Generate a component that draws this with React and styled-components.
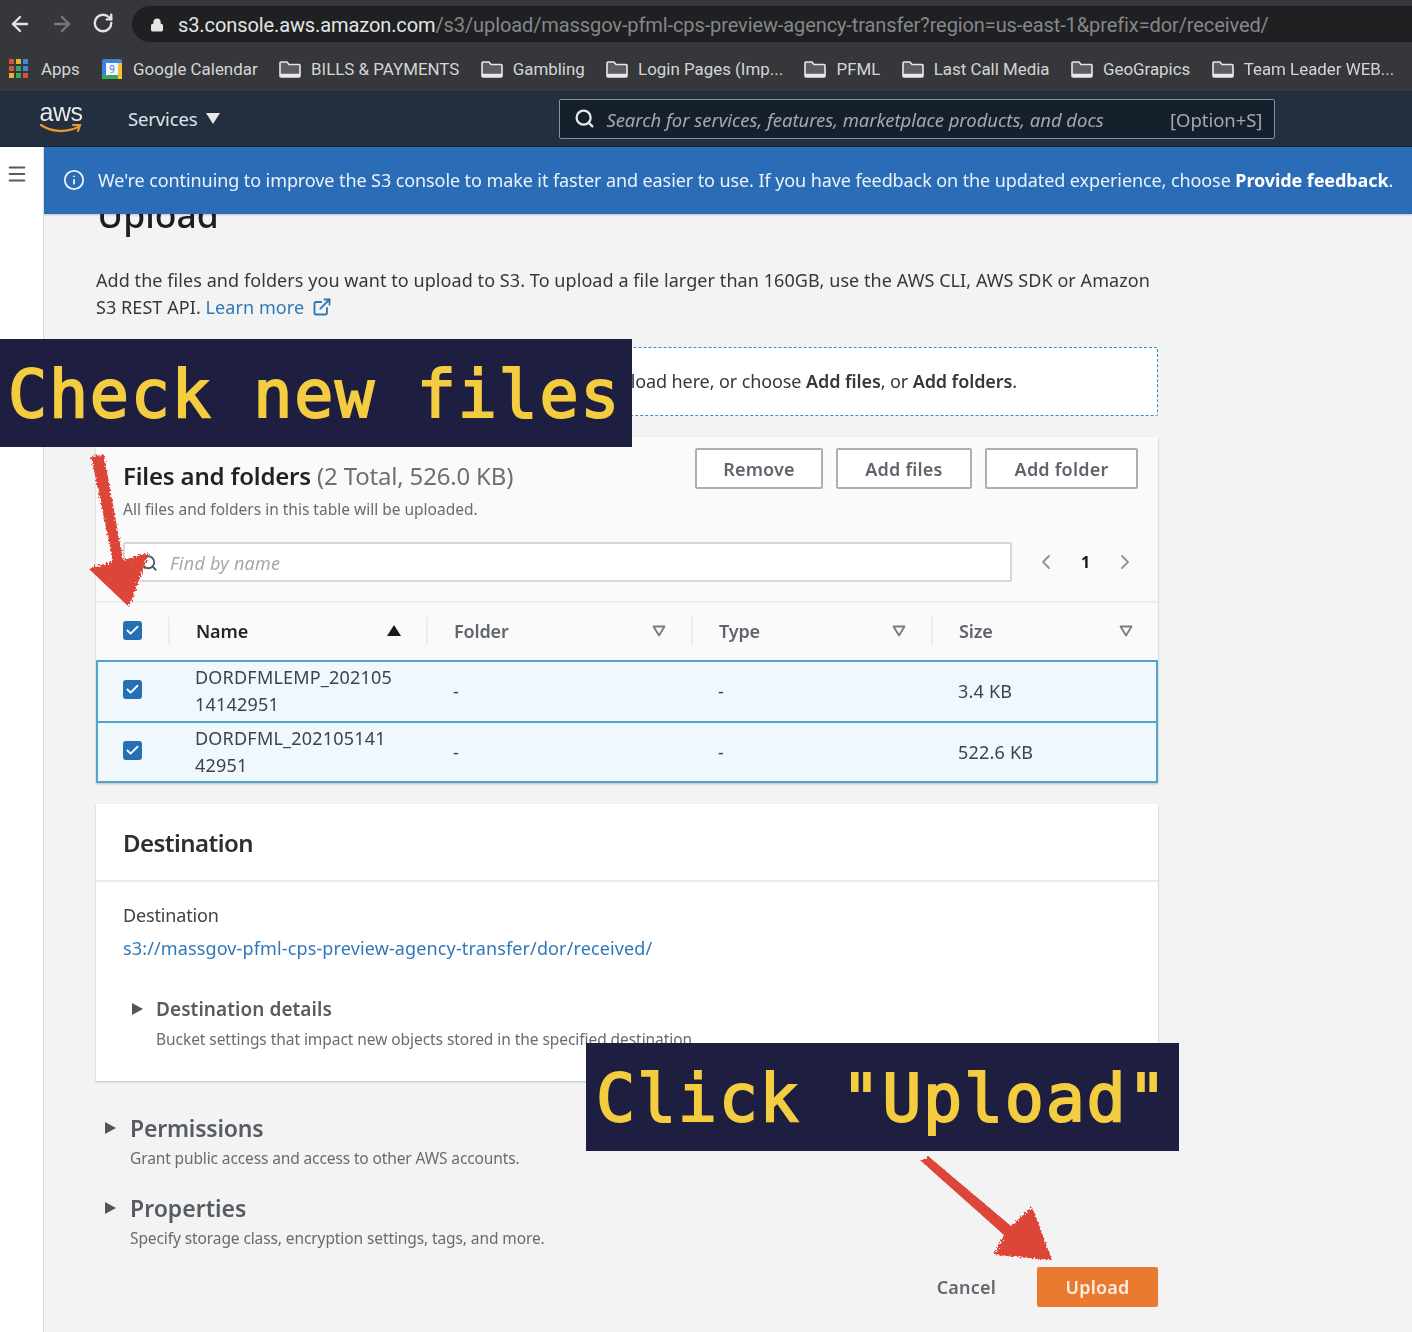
import React from "react";
import styled, { createGlobalStyle } from "styled-components";
import { ArrowLeft, ArrowRight, RotateCw, Lock, Search, Info, Menu, ChevronLeft, ChevronRight, Check, ExternalLink } from "lucide-react";

const GlobalStyle = createGlobalStyle`
	html, body { margin: 0; padding: 0; background: #f3f3f3; }
	* { box-sizing: border-box; }
`;

const Page = styled.div`
	position: relative;
	width: 1412px;
	height: 1332px;
	overflow: hidden;
	font-family: "Noto Sans", "Liberation Sans", sans-serif;
	color: #2b2f33;
`;

const Soft = styled.div`
	filter: blur(0.5px);
`;

const BrowserBar = styled.div`
	height: 46px;
	background: #36373a;
	display: flex;
	align-items: center;
	padding: 4px 0 0 8px;
	color: #d6d7d9;
`;

const NavButton = styled.span`
	width: 24px;
	height: 24px;
	margin-right: 18px;
	margin-top: -3px;
	display: flex;
	color: ${(p) => (p.$off ? "#77787b" : "#e2e3e5")};
`;

const UrlBar = styled.div`
	margin: -3px 0 0 -2px;
	flex: 1;
	height: 36px;
	border-radius: 18px 0 0 18px;
	background: #1f2022;
	display: flex;
	align-items: center;
	padding: 2px 0 0 18px;
	font-family: Roboto, sans-serif;
	font-size: 20px;
	letter-spacing: -0.1px;
	color: #85878a;
	white-space: nowrap;
	svg { margin-right: 14px; flex: none; }
	b { font-weight: 400; color: #e4e5e6; }
`;

const Bookmarks = styled.div`
	height: 45px;
	background: #36373a;
	display: flex;
	align-items: center;
	padding-left: 9px;
	gap: 21.4px;
	font-family: Roboto, sans-serif;
	font-size: 16.9px;
	color: #d4d5d7;
	white-space: nowrap;
`;

const Bookmark = styled.span`
	display: flex;
	align-items: center;
	gap: 10px;
`;

const AppsBookmark = styled(Bookmark)`
	gap: 13px;
`;

const AppsGrid = styled.span`
	display: grid;
	grid-template-columns: repeat(3, 5px);
	grid-auto-rows: 5px;
	gap: 2px;
`;

const AppsDot = styled.i`
	background: ${(p) => p.$c};
`;

const AwsBar = styled.div`
	height: 56px;
	background: #232f3e;
	display: flex;
	align-items: center;
	padding-left: 38px;
	border-bottom: 1px solid #1a2430;
`;

const AwsLogo = styled.div`
	position: relative;
	width: 46px;
	height: 40px;
	font-family: "Liberation Sans", sans-serif;
	font-size: 25px;
	line-height: 26px;
	color: #e6e8ea;
	letter-spacing: -0.5px;
	text-align: center;
	svg { display: block; margin-top: -2px; }
`;

const Services = styled.div`
	margin-left: 44px;
	font-family: "Noto Sans", sans-serif;
	font-size: 18.5px;
	color: #dfe2e5;
	display: flex;
	align-items: center;
	gap: 9px;
	letter-spacing: -0.15px;
	&::after {
		content: "";
		border-left: 7px solid transparent;
		border-right: 7px solid transparent;
		border-top: 11px solid #e6e8ea;
	}
`;

const GlobalSearch = styled.div`
	margin-left: 339px;
	width: 716px;
	height: 40px;
	background: #16202c;
	border: 1px solid #8a9199;
	border-radius: 2px;
	display: flex;
	align-items: center;
	padding: 2px 12px 0 14px;
	color: #e6e8ea;
	font-size: 18.5px;
	letter-spacing: -0.05px;
	svg { margin-right: 11px; flex: none; margin-top: -2px; }
	em { color: #a4a9af; flex: 1; white-space: nowrap; }
	span { color: #a4a9af; }
`;

const Body = styled.div`
	display: flex;
	height: 1185px;
`;

const Rail = styled.div`
	width: 44px;
	flex: none;
	background: #fff;
	border-right: 1px solid #d5dbdb;
	padding: 16px 0 0 6px;
	color: #555b61;
	svg { display: block; }
`;

const Main = styled.div`
	flex: 1;
	min-width: 0;
	overflow: hidden;
`;

const Banner = styled.div`
	position: relative;
	z-index: 1;
	height: 67px;
	background: #2a6cb6;
	display: flex;
	align-items: center;
	padding-left: 19px;
	padding-bottom: 1px;
	gap: 13px;
	color: #eaf3fb;
	font-size: 18px;
	letter-spacing: -0.09px;
	white-space: nowrap;
	box-shadow: 0 1px 2px rgba(0, 0, 0, 0.2);
	b { font-weight: 700; color: #fff; }
`;

const Content = styled.div`
	width: 1114px;
	padding-left: 52px;
`;

const PageTitle = styled.h1`
	margin: -21px 0 0 1px;
	font-size: 35.5px;
	line-height: 42px;
	font-weight: 500;
	color: #1b1f23;
`;

const Intro = styled.p`
	margin: 32px 0 0;
	font-size: 18px;
	line-height: 27px;
	letter-spacing: 0.07px;
	color: #33383d;
	a { color: #2f78b8; }
	svg { vertical-align: -3px; margin-left: 8px; color: #2f78b8; }
`;

const DropZone = styled.div`
	margin-top: 26px;
	height: 69px;
	border: 1px dashed #2f8fd0;
	border-radius: 2px;
	background: #fff;
	display: flex;
	align-items: center;
	justify-content: flex-end;
	padding: 0 140px 2px 0;
	font-size: 18px;
	letter-spacing: -0.1px;
	color: #33383d;
	white-space: pre;
	b { font-weight: 600; }
`;

const Panel = styled.section`
	margin-top: ${(p) => p.$top}px;
	background: #fff;
	box-shadow: 0 1px 2px rgba(0, 28, 36, 0.25);
`;

const FilesPanel = styled(Panel)`
	background: #fafafa;
`;

const PanelHead = styled.div`
	display: flex;
	justify-content: space-between;
	padding: 11px 20px 0 27px;
	height: 86px;
`;

const PanelTitle = styled.h2`
	margin: 12px 0 0;
	font-size: 24px;
	line-height: 32px;
	font-weight: 600;
	letter-spacing: -0.18px;
	color: #1f2327;
	span { font-weight: 400; color: #6b7177; }
`;

const PanelNote = styled.p`
	margin: 7px 0 0;
	font-size: 15.5px;
	color: #666c72;
	line-height: 20px;
`;

const Buttons = styled.div`
	display: flex;
	gap: 13px;
`;

const OutlineButton = styled.button`
	height: 41px;
	width: ${(p) => p.$w}px;
	background: #fff;
	border: 2px solid #aab0b5;
	border-radius: 2px;
	font: 600 18px "Noto Sans", sans-serif;
	letter-spacing: 0.2px;
	color: #5f656b;
`;

const FilterRow = styled.div`
	display: flex;
	align-items: center;
	height: 80px;
	padding: 0 21px 0 27px;
	border-bottom: 2px solid #eaeded;
`;

const FilterInput = styled.div`
	width: 889px;
	height: 40px;
	background: #fff;
	border: 2px solid #d5d8da;
	border-radius: 2px;
	display: flex;
	align-items: center;
	padding: 1px 0 0 15px;
	gap: 12px;
	font-size: 18px;
	font-style: italic;
	letter-spacing: 0.25px;
	color: #a4a9ae;
	svg { color: #555b61; }
`;

const Pager = styled.div`
	flex: 1;
	display: flex;
	justify-content: space-between;
	align-items: center;
	padding-left: 22px;
	color: #8e9399;
	b { color: #16191f; font-size: 16px; }
`;

const HeadRow = styled.div`
	display: grid;
	grid-template-columns: 72px 258px 265px 240px 1fr;
	height: 55px;
	align-items: center;
	font-size: 18px;
	font-weight: 600;
	letter-spacing: -0.15px;
	color: #5f656b;
`;

const HeadCell = styled.div`
	height: 28px;
	display: flex;
	align-items: center;
	justify-content: space-between;
	padding: 0 25px 0 26px;
	border-left: 2px solid #eceeee;
	color: ${(p) => (p.$dark ? "#24282c" : "#5f656b")};
`;

const CheckCell = styled.div`
	padding-left: 27px;
`;

const CheckBox = styled.span`
	width: 19px;
	height: 19px;
	display: flex;
	align-items: center;
	justify-content: center;
	border-radius: 3px;
	background: #2470b3;
	color: #fff;
`;

const SortUp = styled.i`
	border-left: 7px solid transparent;
	border-right: 7px solid transparent;
	border-bottom: 11px solid #16191f;
`;

const FilterDown = styled.svg`
	width: 14px;
	height: 12px;
	color: #757b81;
`;

const Rows = styled.div`
	margin-top: 2px;
	border: 2px solid #53a4c9;
	border-radius: 1px;
`;

const Row = styled.div`
	display: grid;
	grid-template-columns: 70px 259px 265px 240px 1fr;
	height: 59px;
	align-items: center;
	background: #f1f8fd;
	font-size: 18px;
	letter-spacing: 0.2px;
	line-height: 27px;
	color: #3e4348;
	& + & { border-top: 2px solid #53a4c9; height: 60px; }
`;

const RowCheck = styled(CheckCell)`
	padding-left: 25px;
	margin-bottom: 4px;
`;

const NameCell = styled.div`
	padding-left: 27px;
	margin-top: -1px;
`;

const ValueCell = styled.div`
	padding-left: 26px;
`;

const SectionHead = styled.div`
	height: 78px;
	padding: 0 27px;
	display: flex;
	align-items: center;
	border-bottom: 2px solid #eaeded;
	font-size: 24px;
	font-weight: 600;
	letter-spacing: -0.55px;
	color: #2b2f33;
`;

const SectionBody = styled.div`
	height: 199px;
	padding: 20px 27px 0;
`;

const FieldLabel = styled.div`
	font-size: 18px;
	line-height: 26px;
	letter-spacing: -0.15px;
	color: #3e4348;
`;

const FieldLink = styled.a`
	display: block;
	margin-top: 7px;
	font-size: 18px;
	line-height: 26px;
	letter-spacing: 0.13px;
	color: #2f78b8;
`;

const Expand = styled.div`
	position: relative;
	padding-left: ${(p) => p.$indent}px;
	margin-top: ${(p) => p.$top}px;
`;

const Caret = styled.i`
	position: absolute;
	left: ${(p) => p.$left}px;
	top: ${(p) => p.$y}px;
	border-top: 6px solid transparent;
	border-bottom: 6px solid transparent;
	border-left: 11px solid #50565c;
`;

const ExpandTitle = styled.div`
	font-size: ${(p) => p.$size}px;
	line-height: 30px;
	font-weight: 600;
	letter-spacing: ${(p) => p.$track}px;
	color: #565c62;
`;

const ExpandNote = styled.div`
	font-size: 15.5px;
	line-height: 20px;
	letter-spacing: ${(p) => p.$track}px;
	margin-top: 5px;
	color: #666c72;
	white-space: nowrap;
`;

const Actions = styled.div`
	display: flex;
	justify-content: flex-end;
	align-items: center;
	gap: 41px;
	margin-top: 19px;
`;

const CancelLink = styled.span`
	font-size: 18px;
	font-weight: 600;
	letter-spacing: 0.2px;
	color: #62686e;
`;

const PrimaryButton = styled.button`
	width: 121px;
	height: 40px;
	background: #ea7a30;
	border: 0;
	border-radius: 2px;
	font: 600 18px "Noto Sans", sans-serif;
	letter-spacing: 0.2px;
	color: #fbeee3;
`;

const Callout = styled.div`
	position: absolute;
	left: ${(p) => p.$x}px;
	top: ${(p) => p.$y}px;
	width: ${(p) => p.$w}px;
	height: 108px;
	background: #1e1f40;
	color: #f3cd3f;
	font-family: "DejaVu Sans Mono", monospace;
	font-size: 65px;
	font-weight: 400;
	-webkit-text-stroke: 2px #f3cd3f;
	letter-spacing: 1.75px;
	line-height: 112px;
	padding-left: ${(p) => p.$pad}px;
	white-space: pre;
`;

const Scribble = styled.svg`
	position: absolute;
	left: 0;
	top: 0;
	pointer-events: none;
`;

const FolderIcon = () => (
	<svg width="22" height="18" viewBox="0 0 22 18" fill="none">
		<path d="M1 3a1 1 0 0 1 1-1h6l2 2.5h10a1 1 0 0 1 1 1V16a1 1 0 0 1-1 1H2a1 1 0 0 1-1-1z" fill="#5d5e61" stroke="#e8e8ea" strokeWidth="1.6" />
		<path d="M1 13.8h20V16a1 1 0 0 1-1 1H2a1 1 0 0 1-1-1z" fill="#e8e8ea" />
	</svg>
);

const CalendarIcon = () => (
	<svg width="22" height="22" viewBox="0 0 22 22">
		<rect x="1" y="1" width="20" height="20" rx="2" fill="#3f7fe0" />
		<rect x="5" y="5" width="12" height="12" fill="#f4f6fa" />
		<rect x="1" y="17" width="16" height="4" fill="#3aa757" />
		<rect x="17" y="5" width="4" height="16" fill="#f2c230" />
		<text x="11" y="15" fontSize="10" fontFamily="Roboto, sans-serif" textAnchor="middle" fill="#3f7fe0">9</text>
	</svg>
);

const FilterTriangle = () => (
	<FilterDown viewBox="0 0 14 12" fill="none">
		<path d="M1.5 1.5h11L7 10.5z" stroke="currentColor" strokeWidth="1.8" strokeLinejoin="round" />
	</FilterDown>
);

const Tick = () => <Check size={15} strokeWidth={3} />;

const appsColors = ["#d9503f", "#e8b32f", "#3f87d9", "#d9503f", "#3aa757", "#3f87d9", "#e8b32f", "#3aa757", "#d9503f"];
const folders = ["BILLS & PAYMENTS", "Gambling", "Login Pages (Imp...", "PFML", "Last Call Media", "GeoGrapics", "Team Leader WEB...", ""];

const files = [
	{ name: ["DORDFMLEMP_202105", "14142951"], size: "3.4 KB" },
	{ name: ["DORDFML_202105141", "42951"], size: "522.6 KB" },
];

function App() {
	return (
		<Page>
			<GlobalStyle />
			<Soft>
				<BrowserBar>
					<NavButton><ArrowLeft size={24} strokeWidth={2.4} /></NavButton>
					<NavButton $off><ArrowRight size={24} strokeWidth={2.4} /></NavButton>
					<NavButton><RotateCw size={22} strokeWidth={2.6} /></NavButton>
					<UrlBar>
						<Lock size={14} fill="#e4e5e6" strokeWidth={2.6} color="#e4e5e6" />
						<span><b>s3.console.aws.amazon.com</b>/s3/upload/massgov-pfml-cps-preview-agency-transfer?region=us-east-1&prefix=dor/received/</span>
					</UrlBar>
				</BrowserBar>
				<Bookmarks>
					<AppsBookmark>
						<AppsGrid>{appsColors.map((c, i) => <AppsDot key={i} $c={c} />)}</AppsGrid>
						Apps
					</AppsBookmark>
					<Bookmark><CalendarIcon />Google Calendar</Bookmark>
					{folders.map((f) => <Bookmark key={f}><FolderIcon />{f}</Bookmark>)}
				</Bookmarks>
				<AwsBar>
					<AwsLogo>
						aws
						<svg width="46" height="12" viewBox="0 0 46 12" fill="none">
							<path d="M3 2c10 7 25 8 37 2" stroke="#e8952f" strokeWidth="2.4" strokeLinecap="round" />
							<path d="M35 2h7l-2 6" stroke="#e8952f" strokeWidth="2.2" strokeLinecap="round" />
						</svg>
					</AwsLogo>
					<Services>Services</Services>
					<GlobalSearch>
						<Search size={21} strokeWidth={2.6} />
						<em>Search for services, features, marketplace products, and docs</em>
						<span>[Option+S]</span>
					</GlobalSearch>
				</AwsBar>
				<Body>
					<Rail><Menu size={22} strokeWidth={2.2} /></Rail>
					<Main>
						<Banner>
							<Info size={22} strokeWidth={2} />
							<span>We're continuing to improve the S3 console to make it faster and easier to use. If you have feedback on the updated experience, choose <b>Provide feedback</b>.</span>
						</Banner>
						<Content>
							<PageTitle>Upload</PageTitle>
							<Intro>
								Add the files and folders you want to upload to S3. To upload a file larger than 160GB, use the AWS CLI, AWS SDK or Amazon S3 REST API. <a>Learn more</a>
								<ExternalLink size={20} strokeWidth={2.2} />
							</Intro>
							<DropZone>
								<span>Drag and drop files and folders you want to upload here, or choose <b>Add files</b>, or <b>Add folders</b>.</span>
							</DropZone>
							<FilesPanel $top={21}>
								<PanelHead>
									<div>
										<PanelTitle>Files and folders <span>(2 Total, 526.0 KB)</span></PanelTitle>
										<PanelNote>All files and folders in this table will be uploaded.</PanelNote>
									</div>
									<Buttons>
										<OutlineButton $w={128}>Remove</OutlineButton>
										<OutlineButton $w={136}>Add files</OutlineButton>
										<OutlineButton $w={153}>Add folder</OutlineButton>
									</Buttons>
								</PanelHead>
								<FilterRow>
									<FilterInput><Search size={18} strokeWidth={2.4} />Find by name</FilterInput>
									<Pager>
										<ChevronLeft size={24} strokeWidth={1.8} />
										<b>1</b>
										<ChevronRight size={24} strokeWidth={1.8} />
									</Pager>
								</FilterRow>
								<HeadRow>
									<CheckCell><CheckBox><Tick /></CheckBox></CheckCell>
									<HeadCell $dark>Name<SortUp /></HeadCell>
									<HeadCell>Folder<FilterTriangle /></HeadCell>
									<HeadCell>Type<FilterTriangle /></HeadCell>
									<HeadCell>Size<FilterTriangle /></HeadCell>
								</HeadRow>
								<Rows>
									{files.map((f) => (
										<Row key={f.size}>
											<RowCheck><CheckBox><Tick /></CheckBox></RowCheck>
											<NameCell>{f.name[0]}<br />{f.name[1]}</NameCell>
											<ValueCell>-</ValueCell>
											<ValueCell>-</ValueCell>
											<ValueCell>{f.size}</ValueCell>
										</Row>
									))}
								</Rows>
							</FilesPanel>
							<Panel $top={21}>
								<SectionHead>Destination</SectionHead>
								<SectionBody>
									<FieldLabel>Destination</FieldLabel>
									<FieldLink>s3://massgov-pfml-cps-preview-agency-transfer/dor/received/</FieldLink>
									<Expand $indent={33} $top={33}>
										<Caret $left={9} $y={9} />
										<ExpandTitle $size={19} $track={0.07}>Destination details</ExpandTitle>
										<ExpandNote $track={-0.06}>Bucket settings that impact new objects stored in the specified destination.</ExpandNote>
									</Expand>
								</SectionBody>
							</Panel>
							<Expand $indent={34} $top={32}>
								<Caret $left={9} $y={9} />
								<ExpandTitle $size={23} $track={-0.2}>Permissions</ExpandTitle>
								<ExpandNote $track={-0.12}>Grant public access and access to other AWS accounts.</ExpandNote>
							</Expand>
							<Expand $indent={34} $top={25}>
								<Caret $left={9} $y={9} />
								<ExpandTitle $size={23} $track={0}>Properties</ExpandTitle>
								<ExpandNote $track={-0.1}>Specify storage class, encryption settings, tags, and more.</ExpandNote>
							</Expand>
							<Actions>
								<CancelLink>Cancel</CancelLink>
								<PrimaryButton>Upload</PrimaryButton>
							</Actions>
						</Content>
					</Main>
				</Body>
			</Soft>
			<Callout $x={0} $y={339} $w={632} $pad={8}>Check new files</Callout>
			<Callout $x={586} $y={1043} $w={593} $pad={10}>Click "Upload"</Callout>
			<Scribble width="1412" height="1332" viewBox="0 0 1412 1332">
				<defs>
					<filter id="rough" x="-10%" y="-10%" width="120%" height="120%">
						<feTurbulence type="fractalNoise" baseFrequency="0.5" numOctaves="2" seed="4" />
						<feDisplacementMap in="SourceGraphic" scale="7" />
						<feGaussianBlur stdDeviation="0.4" />
					</filter>
				</defs>
				<g fill="#dc4438" filter="url(#rough)">
					<path d="M91 456L104 455L123 560L149 553L129 607L89 569L113 561z" />
					<path d="M921 1161L928 1156L1011 1226L1032 1207L1052 1260L994 1255L1004 1235z" />
				</g>
			</Scribble>
		</Page>
	);
}

export default App;
